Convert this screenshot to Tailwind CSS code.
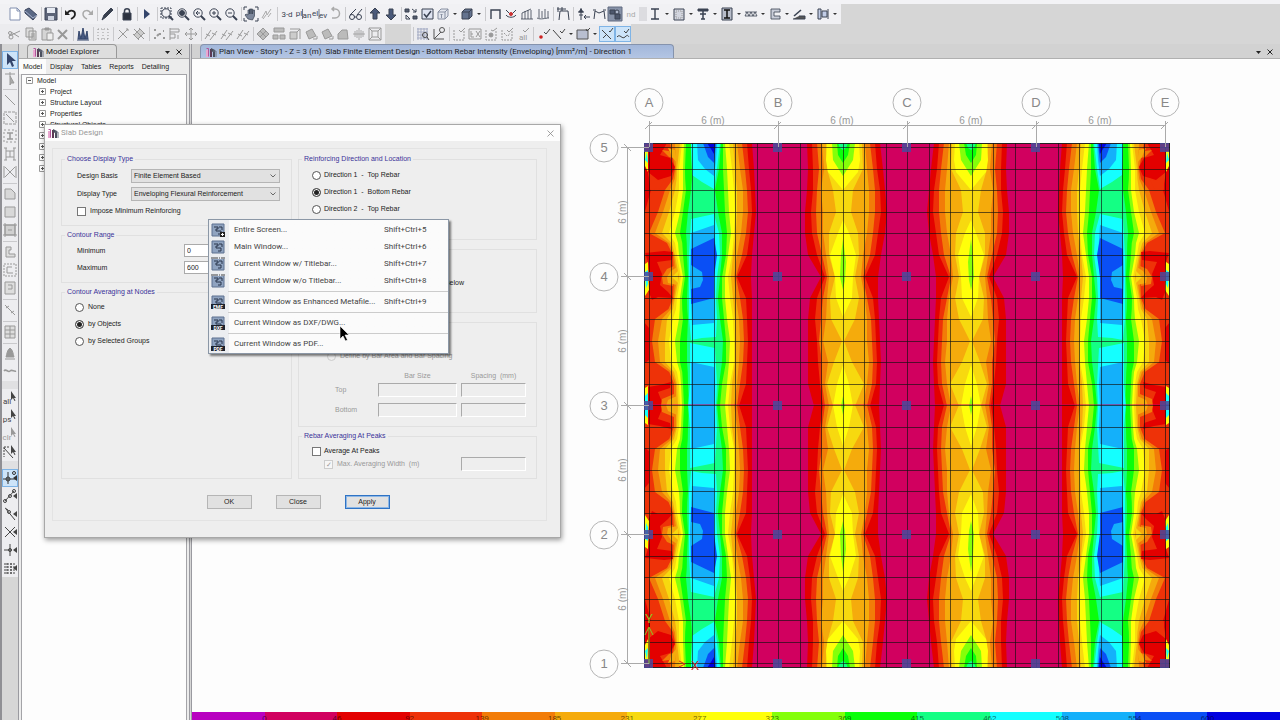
<!DOCTYPE html>
<html lang="en">
<head>
    <meta charset="UTF-8">
    <meta name="viewport" content="width=device-width, initial-scale=1.0">
    <title>Slab Design</title>
    <script src="https://cdn.jsdelivr.net/npm/@tailwindcss/browser@4"></script>
</head>
<body class="h-screen overflow-hidden flex flex-col bg-[#d6d6d6] font-['Liberation_Sans',sans-serif] text-[7px] leading-[10px] text-[#222]">
    <header class="shrink-0">
        <div class="h-1 bg-[#f3f3f6]"></div>
        <div id="toolbar-main" class="flex items-center h-5 w-fit pl-[7px] pr-0.5 bg-[#f1f1f4] text-[#3a4252]"></div>
        <div class="flex h-5">
            <div id="toolbar-edit" class="flex items-center h-full pl-[7px] pr-0.5 bg-[#ececef] text-[#999]"></div>
            <div id="toolbar-snap" class="flex items-center h-full ml-[26px] bg-[#ececef] text-[#999]"></div>
        </div>
    </header>

    <main class="flex-1 min-h-0 flex">
        <aside class="w-[18px] shrink-0 border-l-2 border-[#8f8f94] pt-[7px]">
            <div id="toolbar-draw" class="flex flex-col bg-[#ededf0] text-[#999]"></div>
        </aside>

        <section class="w-[172px] shrink-0 flex flex-col border-x border-[#9a9aa0] bg-[#ececec]">
            <div class="flex items-end h-[15px] bg-[#d9d9d9] border-b border-[#aaa]">
                <h2 class="flex items-center gap-0.5 ml-2 h-[14px] w-[90px] pl-1 rounded-t border border-b-0 border-[#999] bg-[#dedede] font-[Roboto,sans-serif] text-[8px]">
                    <svg class="size-3" viewBox="0 0 12 12"><use href="#logo"/></svg>Model Explorer
                </h2>
                <button aria-label="Window position" class="ml-auto w-3 h-3 grid place-items-center"><svg class="w-[5px] h-[3px]" viewBox="0 0 5 3"><path d="M0 0h5L2.500 3z" fill="#222"/></svg></button>
                <button aria-label="Close explorer" class="w-3 h-3 mr-1 grid place-items-center"><svg class="size-[6px]" viewBox="0 0 6 6"><path d="M.5.5l5 5M5.500.5l-5 5" stroke="#222"/></svg></button>
            </div>
            <nav class="flex h-[15px] items-center">
                <button class="h-full px-1 bg-[#fcfcfc]">Model</button>
                <button class="px-1">Display</button>
                <button class="px-1">Tables</button>
                <button class="px-1">Reports</button>
                <button class="px-1">Detailing</button>
            </nav>
            <ul id="tree" class="flex-1 mx-0.5 border border-b-0 border-[#a4a4a8] bg-[#fdfdfd] leading-[11px]"></ul>
        </section>

        <section class="flex-1 min-w-0 flex flex-col border-l border-[#9a9aa0] ml-px bg-[#fdfdfd]">
            <div class="flex items-end h-[15px] bg-[#d2d2d2] border-b border-[#b0b0b0]">
                <h1 class="flex items-center gap-0.5 ml-2 w-[474px] h-[14px] pl-1 rounded-t border border-b-0 border-[#8593ad] bg-linear-to-b from-[#a3b7da] to-[#b3c5e4] font-[Roboto,sans-serif] text-[8px] whitespace-nowrap">
                    <svg class="size-3 shrink-0" viewBox="0 0 12 12"><use href="#logo"/></svg>
                    <span>Plan View - Story1 - Z = 3 (m)&nbsp; Slab Finite Element Design - Bottom Rebar Intensity (Enveloping) [mm²/m] - Direction 1</span>
                </h1>
                <button aria-label="Window list" class="ml-auto w-3 h-3 grid place-items-center"><svg class="w-[5px] h-[3px]" viewBox="0 0 5 3"><path d="M0 0h5L2.500 3z" fill="#222"/></svg></button>
                <button aria-label="Close view" class="w-3 h-3 mr-1 grid place-items-center"><svg class="size-[6px]" viewBox="0 0 6 6"><path d="M.5.5l5 5M5.500.5l-5 5" stroke="#222"/></svg></button>
            </div>
            <svg class="flex-1 min-h-0 w-full font-['Liberation_Sans',sans-serif]" viewBox="192 59 1088 653">
                <defs>
                    <g id="quarter"></g>
                    <g id="half"><use href="#quarter"/><use href="#quarter" transform="matrix(1 0 0 -1 0 811)"/></g>
                </defs>
                <use href="#half"/>
                <use href="#half" transform="matrix(-1 0 0 1 1814 0)"/>
                <g id="mesh"></g>
                <g id="axes"></g>
            </svg>
            <div id="legend" class="h-2 shrink-0 flex overflow-hidden text-[8px]"></div>
        </section>
    </main>

    <!-- Slab Design dialog -->
    <form class="absolute left-11 top-[124px] w-[517px] h-[414px] flex flex-col border border-[#a8a8a8] bg-[#eee] shadow-[1px_2px_5px_rgba(0,0,0,.4)]" onsubmit="return false">
        <div class="h-4 flex items-center px-0.5 gap-0.5 bg-[#fdfdfd] text-[#999] font-[Roboto,sans-serif] text-[8px]">
            <svg class="size-3" viewBox="0 0 12 12"><use href="#logo"/></svg>
            <h2>Slab Design</h2>
            <button type="button" aria-label="Close" class="ml-auto mr-0.5 size-3 grid place-items-center"><svg class="size-[7px]" viewBox="0 0 7 7"><path d="M.5.5l6 6M6.500.5l-6 6" stroke="#888" stroke-width=".8"/></svg></button>
        </div>
        <div class="flex-1 ml-[7px] mt-[7px] mb-4 mr-[13px] border border-[#e3e3e3] pt-[5px] pl-2 pr-[9px] flex flex-col">
            <div class="flex gap-1.5 h-[325px]">
                <div class="w-[231px] flex flex-col gap-1">
                    <fieldset class="min-w-0 h-[72px] border border-[#e0e0e0] px-[15px]">
                        <legend class="-ml-3 px-0.5 text-[#3a3299]">Choose Display Type</legend>
                        <div class="flex flex-col gap-1 pt-[5px]">
                            <div class="flex items-center justify-between">
                                <label for="basis">Design Basis</label>
                                <span class="relative w-[149px] -mr-1"><select id="basis" class="block appearance-none w-full h-[14px] pl-0.5 border border-[#b5b5b5] bg-[#e1e1e1]"><option>Finite Element Based</option></select><svg class="absolute right-1 top-[5px] w-[6px] h-1 pointer-events-none" viewBox="0 0 6 4"><path d="M.5.5L3 3 5.500.5" fill="none" stroke="#666"/></svg></span>
                            </div>
                            <div class="flex items-center justify-between">
                                <label for="type">Display Type</label>
                                <span class="relative w-[149px] -mr-1"><select id="type" class="block appearance-none w-full h-[14px] pl-0.5 border border-[#b5b5b5] bg-[#e1e1e1]"><option>Enveloping Flexural Reinforcement</option></select><svg class="absolute right-1 top-[5px] w-[6px] h-1 pointer-events-none" viewBox="0 0 6 4"><path d="M.5.5L3 3 5.500.5" fill="none" stroke="#666"/></svg></span>
                            </div>
                            <label class="flex items-center gap-1 h-3"><input type="checkbox" class="appearance-none size-[9px] border border-[#777] bg-white">Impose Minimum Reinforcing</label>
                        </div>
                    </fieldset>
                    <fieldset class="min-w-0 h-[53px] border border-[#e0e0e0] px-[15px]">
                        <legend class="-ml-3 px-0.5 text-[#3a3299]">Contour Range</legend>
                        <div class="flex flex-col gap-1 pt-1">
                            <div class="flex items-center"><label for="min" class="w-[107px]">Minimum</label><input id="min" value="0" class="w-20 h-[13px] pl-0.5 border border-[#aaa] bg-white"></div>
                            <div class="flex items-center"><label for="max" class="w-[107px]">Maximum</label><input id="max" value="600" class="w-20 h-[13px] pl-0.5 border border-[#aaa] bg-white"></div>
                        </div>
                    </fieldset>
                    <fieldset class="min-w-0 flex-1 border border-[#e0e0e0] px-[13px]">
                        <legend class="-ml-2.5 px-0.5 text-[#3a3299]">Contour Averaging at Nodes</legend>
                        <div class="flex flex-col gap-[5px] pt-1">
                            <label class="flex items-center gap-1 h-3"><input type="radio" name="avg" class="appearance-none size-[9px] rounded-full border border-[#555] bg-white checked:bg-[#222] checked:shadow-[inset_0_0_0_1px_white]">None</label>
                            <label class="flex items-center gap-1 h-3"><input type="radio" name="avg" checked class="appearance-none size-[9px] rounded-full border border-[#555] bg-white checked:bg-[#222] checked:shadow-[inset_0_0_0_1px_white]">by Objects</label>
                            <label class="flex items-center gap-1 h-3"><input type="radio" name="avg" class="appearance-none size-[9px] rounded-full border border-[#555] bg-white checked:bg-[#222] checked:shadow-[inset_0_0_0_1px_white]">by Selected Groups</label>
                        </div>
                    </fieldset>
                </div>
                <div class="flex-1 flex flex-col gap-1">
                    <fieldset class="min-w-0 h-[86px] border border-[#e0e0e0] px-[13px]">
                        <legend class="-ml-2.5 px-0.5 text-[#3a3299]">Reinforcing Direction and Location</legend>
                        <div class="flex flex-col gap-[5px] pt-[5px]">
                            <label class="flex items-center gap-[3px] h-3 whitespace-pre"><input type="radio" name="dir" class="appearance-none size-[9px] rounded-full border border-[#555] bg-white checked:bg-[#222] checked:shadow-[inset_0_0_0_1px_white]">Direction 1  -  Top Rebar</label>
                            <label class="flex items-center gap-[3px] h-3 whitespace-pre"><input type="radio" name="dir" checked class="appearance-none size-[9px] rounded-full border border-[#555] bg-white checked:bg-[#222] checked:shadow-[inset_0_0_0_1px_white]">Direction 1  -  Bottom Rebar</label>
                            <label class="flex items-center gap-[3px] h-3 whitespace-pre"><input type="radio" name="dir" class="appearance-none size-[9px] rounded-full border border-[#555] bg-white checked:bg-[#222] checked:shadow-[inset_0_0_0_1px_white]">Direction 2  -  Top Rebar</label>
                        </div>
                    </fieldset>
                    <fieldset class="min-w-0 h-[69px] border border-[#e0e0e0] px-[13px]">
                        <legend class="px-0.5">&nbsp;</legend>
                        <p class="w-[152px] pt-6 text-right">Specified Below</p>
                    </fieldset>
                    <fieldset disabled class="min-w-0 h-[110px] border border-[#e0e0e0] pl-7 pr-2.5 text-[#999]">
                        <legend class="px-0.5">&nbsp;</legend>
                        <label class="flex items-center gap-1 pt-6"><input type="radio" class="appearance-none size-[9px] rounded-full border border-[#ccc]">Define by Bar Area and Bar Spacing</label>
                        <div class="grid grid-cols-[1fr_79px_65px] gap-x-1 gap-y-1.5 pt-2.5 pl-2 items-center">
                            <span></span><span class="text-center -mb-1">Bar Size</span><span class="text-center -mb-1 whitespace-pre">Spacing  (mm)</span>
                            <span>Top</span><input aria-label="Top bar size" class="h-[14px] min-w-0 border border-t-[#aaa] border-l-[#aaa] border-b-white border-r-white"><input aria-label="Top spacing" class="h-[14px] min-w-0 border border-t-[#aaa] border-l-[#aaa] border-b-white border-r-white">
                            <span>Bottom</span><input aria-label="Bottom bar size" class="h-[14px] min-w-0 border border-t-[#aaa] border-l-[#aaa] border-b-white border-r-white"><input aria-label="Bottom spacing" class="h-[14px] min-w-0 border border-t-[#aaa] border-l-[#aaa] border-b-white border-r-white">
                        </div>
                    </fieldset>
                    <fieldset class="min-w-0 flex-1 border border-[#e0e0e0] px-[13px]">
                        <legend class="-ml-2.5 px-0.5 text-[#3a3299]">Rebar Averaging At Peaks</legend>
                        <label class="flex items-center gap-[3px] pt-[5px]"><input type="checkbox" class="appearance-none size-[9px] border border-[#777] bg-white">Average At Peaks</label>
                        <div class="flex items-center justify-between pt-px pl-3 -mr-1 text-[#999]">
                            <label for="maxavg" class="flex items-center gap-1 whitespace-pre"><input type="checkbox" id="maxavg" checked disabled class="appearance-none size-[9px] grid place-items-center border border-[#ccc] bg-[#f6f6f6] leading-[7px] before:content-['✓']">Max. Averaging Width  (m)</label>
                            <input aria-label="Averaging width" disabled class="w-[65px] h-[14px] mr-px border border-t-[#aaa] border-l-[#aaa] border-b-white border-r-white">
                        </div>
                    </fieldset>
                </div>
            </div>
            <div class="flex justify-center gap-6 mt-4 pr-0.5">
                <button class="w-[45px] h-[14px] border border-[#b5b5b5] bg-[#e1e1e1]">OK</button>
                <button class="w-[45px] h-[14px] border border-[#b5b5b5] bg-[#e1e1e1]">Close</button>
                <button class="w-[45px] h-[14px] border border-[#2f73c4] bg-[#e1e1e1] shadow-[inset_0_0_0_1px_#8db7e6]">Apply</button>
            </div>
        </div>
    </form>

    <!-- Capture picture menu -->
    <div id="menu" role="menu" class="absolute left-[208px] top-[219px] w-[241px] py-px border border-[#8b97a6] bg-[#fbfbfb] bg-linear-to-r from-[#eceef1] from-[20px] to-[#fbfbfb] to-[20px] shadow-[2px_2px_2px_rgba(0,0,0,.5)] font-[Roboto,sans-serif] text-[8px] text-[#444]"></div>
    <svg class="absolute left-[339px] top-[325px] w-[11px] h-[17px] pointer-events-none" viewBox="0 0 11 17"><path d="M1 1v13l3-3 2.500 5 2-1L6 10h4z" fill="#000" stroke="#fff" stroke-width=".6"/></svg>

    <svg class="hidden">
        <symbol id="logo" viewBox="0 0 12 12"><path d="M1 4h3v7H1z" fill="#e9a8d0"/><path d="M1.500 2.500h2v8" fill="none" stroke="#b0559a"/><path d="M5 3h2v8H5z" fill="#5d3a55"/><path d="M6 2l4 2v7H8V6L6 5z" fill="#4a4f5e"/><path d="M8 5h3v6" fill="none" stroke="#6b7180"/></symbol>
    </svg>

    <script>
        // Glyphs on a 16x16 grid; strokes take the button's text colour
        const lens = '<circle cx="7" cy="7" r="4.200"/><path d="M10 10l4 4" stroke-width="2"/>';
        const arrowUp = '<path d="M8 2l5 5h-3v6H6V7H3z" fill="#4b5a7a"/>';
        const slab = '<path d="M3 6l6-3 5 6-7 4z" fill="currentColor" fill-opacity=".5"/>';
        const cursor = '<path d="M9 1v9l2-2 1.500 3 1-.5L12 8h2z" fill="currentColor" stroke="none"/>';
        const snapEnd = '<path d="M15 5l-4 3 4 3z" fill="currentColor" stroke="none"/>';
        const word = (t, x = 8, y = 11) => `<text x="${x}" y="${y}" text-anchor="middle" font-size="8" font-family="Roboto, sans-serif" fill="currentColor" stroke="none">${t}</text>`;
        const icons = {
            new: '<path d="M3 2h7l3 3v9H3z" fill="#fff" stroke="#8290b0"/><path d="M10 2v3h3" stroke="#8290b0"/>',
            open: '<path d="M2 4l4-2 8 7-4 5-8-7z" fill="#5a6885" stroke="#39435c"/><path d="M2 5l8 7 4-3" stroke="#a4b0cc"/>',
            save: '<path d="M2 2h12v12H2z" fill="#5c6478" stroke="#3d4558"/><path d="M4 2h8v5H4z" fill="#e8ecf4" stroke="none"/><path d="M5 10h6v4H5z" fill="#cdd3e0" stroke="none"/>',
            undo: '<path d="M4 8c2-5 8-4 8 0 0 3-2 4-4 5" stroke="#222" stroke-width="1.800"/><path d="M2 4v5h5z" fill="#222" stroke="none"/>',
            redo: '<path d="M12 8c-2-5-8-4-8 0 0 3 2 4 4 5" stroke="#aaa" stroke-width="1.500"/><path d="M14 4v5H9z" fill="#aaa" stroke="none"/>',
            pen: '<path d="M3 14l2-5 7-7 2 2-7 7z" fill="#39404e"/>',
            lock: '<path d="M4 7h8v7H4z" fill="#2c3240"/><path d="M5.500 7V5c0-3 5-3 5 0v2" stroke-width="1.500"/>',
            run: '<path d="M5 3l6 5-6 5z" fill="#34456b" stroke="none"/>',
            zoomWin: lens + '<path d="M2 2h10v10H2z" stroke-dasharray="2 1"/>',
            zoomFull: lens + '<circle cx="7" cy="7" r="2.500" fill="currentColor"/>',
            zoomPrev: lens + '<path d="M9 7H5m2-2L5 7l2 2"/>',
            zoomIn: lens + '<path d="M5 7h4M7 5v4"/>',
            zoomOut: lens + '<path d="M5 7h4"/>',
            pan: '<path d="M5 13L2 9l1-1 2 1V4h1.500v4V3H8v5-5h1.500v5l.5-4h1.500v6l-2 4z" fill="#7d879b" stroke-width=".7"/><path d="M1 4V1h3M12 1h3v3M1 12v3h3M15 12v3h-3"/>',
            walk: '<path d="M3 12l4-7 1 4 4-6M4 13l3-4M9 11l3-4" stroke="#aaa"/>',
            t3d: word('3-d', 8, 11), tplan: word('pl', 4, 10) + word('an', 12, 12) + '<path d="M7.500 3v10" stroke-width=".7"/>', tele: word('el', 4, 10) + word('ev', 12, 12) + '<path d="M8 3v10" stroke-width=".7"/>', tnd: '<g color="#aaa">' + word('nd') + '</g>',
            rotate: '<path d="M5 3h3c6 0 6 9 0 9H5M7 1L5 3l2 2" stroke="#aaa" stroke-width="1.500"/>',
            glasses: '<circle cx="5" cy="11" r="2.500"/><circle cx="12" cy="11" r="2.500"/><path d="M3 9l6-6M10 9l5-6M7 11h2"/>',
            up: arrowUp, down: '<g transform="rotate(180 8 8)">' + arrowUp + '</g>',
            views: '<path d="M2 3h4v3H2zM10 10h4v3h-4z" fill="#555d6e"/><path d="M9 3l4 3m0-3v3h-3M3 9v4h4M3 9l4 4"/>',
            check: '<path d="M3 3h11v10H3z" fill="#dfe4f2"/><path d="M5 8l2.500 3L12 5" stroke-width="1.500"/>',
            box: '<path d="M3 6l3-3h7v7l-3 3H3z" fill="#e3e6ee" stroke="#8890a2"/><path d="M3 6h7v7M10 6l3-3M6.500 12V8m-1 1l1-1 1 1" stroke="#8890a2"/>',
            solid: '<path d="M3 6l3-3h7v7l-3 3H3z" fill="#64738f"/><path d="M3 6h7v7M10 6l3-3"/>',
            frame: '<path d="M4 13V4h9v9" stroke-width="1.400"/>',
            moment: '<path d="M3 4l5 5 5-5M3 9c2 3 8 3 10 0"/><circle cx="8" cy="8" r="1.500" fill="#c33" stroke="#c33"/>',
            forces: '<path d="M2 13h12M3 13V7M6 13V5M9 13V4M12 13V4M3 7l9-4" stroke-width=".8"/>',
            loads: '<path d="M2 12c4 2 8 0 12 0M4 3v9M7 5v7M10 3v9M13 5v7" stroke-width=".8"/>',
            deform: '<path d="M4 14l1-9h8l1 9M2 3h9M3 1v5M7 1v4"/>',
            joint: '<path d="M6 2v12M3 6h6M4 9h4M6 3l2 3H4z" fill="currentColor"/><path d="M10 11h5m-4-2l-2 2 2 2"/>',
            truss: '<path d="M3 13l1-8 4 2 5-2 1 8M2 4h3M12 4h3"/>',
            contour: '<path d="M1 1h14v14H1z" fill="#8792a8" stroke="#606a80"/><path d="M3 4h5v4H3zM8 8h5v5H8z" fill="#4d576c"/><circle cx="10" cy="6" r="2" fill="#aeb8cc"/>',
            ibeam: '<path d="M4 3h8M4 13h8M8 3v10" stroke-width="1.400"/>',
            section: '<path d="M3 3h10v11H3z" fill="#d2d5df"/><path d="M5 5h6v7H5z" stroke="#999" stroke-dasharray="1 1"/>',
            tee: '<path d="M3 3h10v2H3z" fill="currentColor"/><path d="M8 5v8M5 8h6M6 13h4" stroke-width="1.500"/>',
            encased: '<path d="M3 2h10v12H3z" fill="#b8bdca"/><path d="M5 4h6M5 12h6M8 4v8" stroke="#111" stroke-width="1.500"/>',
            joist: '<path d="M2 6h12M2 10h12M2 10l2-4 2 4 2-4 2 4 2-4 2 4" stroke-width=".8"/>',
            channel: '<path d="M13 3H4v10h9v-3H7V6h6z" fill="#c9cdd9" stroke-width=".8"/>',
            slope: '<path d="M3 10l7-6" stroke-width="1.600"/><path d="M2 13h12v-3H8" fill="#555"/>',
            panel: '<path d="M3 3h3v10H3zM7 5h5v6H7z" fill="#c2cde6"/><path d="M13 3v10"/>',
            cut: '<path d="M2 10l11-5M4 6l8 5"/><circle cx="4" cy="11" r="2"/><circle cx="3" cy="7" r="1.500"/>',
            copy: '<path d="M3 2h7v9H3zM6 5h7v9H6z" fill="#ddd"/><path d="M8 8h4M8 10h4M8 12h4"/>',
            paste: '<path d="M3 3h9v11H3z" fill="#d5d5d5"/><path d="M6 2h4v2H6z" fill="#999"/><path d="M8 7h6v7H8z" fill="#eee"/>',
            del: '<path d="M3 4l9 9M12 4l-9 9" stroke-width="2"/>',
            towers: '<path d="M2 14h12M3 13l1-8 2 8zM6 13l2-11 2 11zM10 13l2-8 1 8z" fill="#485a82" stroke="#34466c"/>',
            points: '<path d="M3 3v10M8 3v10M13 3v10M3 3h10M3 13h10" stroke-dasharray="1 2"/>',
            lineEdit: '<path d="M3 13L13 3M4 4l8 8M11 3h2v2"/>',
            areaEdit: '<path d="M3 9l6-6 4 4-6 6z" fill="#ccc"/><path d="M3 3l10 10M8 2l6 6M2 8l6 6"/>',
            nodes: '<path d="M3 4h2M8 8h2M3 12h2M12 12h2M12 5h1M6 10l2-2" stroke-width="2"/>',
            align: '<path d="M3 2v12M3 3h9v3H3M3 8h5v4H3M11 9v4"/>',
            move: '<path d="M8 2v12M2 8h12M6 4l2-2 2 2M6 12l2 2 2-2M4 6L2 8l2 2M12 6l2 2-2 2"/>',
            join: '<path d="M2 13L8 4M7 14l7-9M3 8l4 2M9 7l4 2"/>',
            slab, divide: '<path d="M8 2l6 6-6 6-6-6zM5 5l6 6M11 5l-6 6" fill="#bbb"/>',
            rows: '<path d="M3 2h10v4H3zM2 9h5v4H2zM9 9h5v4H9z" fill="#bbb"/>',
            expand: '<path d="M3 6h7v7H3z" fill="#ccc"/><path d="M3 3h10v10M10 6l3-3"/>',
            turn: '<path d="M3 6l6-3 4 7-7 3z" fill="#bbb"/><path d="M10 13h4v-3"/>',
            poly: '<path d="M3 8l4-4h5l1 9H3z" fill="#bbb"/>',
            mirror: '<path d="M8 2v12M2 8h12M4 5v6M12 5v6M6 4v8M10 4v8" stroke-width=".8"/>',
            inset: '<path d="M2 2h12v12H2zM5 5h6v6H5zM2 2l3 3M14 2l-3 3M2 14l3-3M14 14l-3-3"/>',
            gridSnap: '<path d="M2 3h11M2 6h11M2 9h11M2 12h11M3 2v12M6 2v12M9 2v12M12 2v12" stroke="#a5acc4"/><circle cx="10" cy="9" r="2.500" stroke="#444"/><path d="M12 11l2 3" stroke="#444"/>',
            axis: '<path d="M3 3v10h10M3 13l7-7" stroke="#555"/><circle cx="11" cy="4" r="2.500" stroke="#555"/>',
            dashBox: '<path d="M3 4v10h10V4" stroke-dasharray="2 1"/><path d="M8 4l2 2 4-4"/>',
            exBox: '<path d="M2 3h12v10H2zM4 5v6h3M4 8h2M9 5l4 6M13 5l-4 6"/>',
            dotBox: '<path d="M3 4v10h10V4" stroke-dasharray="2 1"/><circle cx="8" cy="9" r="2" fill="currentColor"/><path d="M8 4l2 1 4-3"/>',
            pairBox: '<path d="M3 4v10h10V4M5 7l3 3M9 10l2-3" stroke-dasharray="2 1"/><path d="M8 4l2 2 4-4"/>',
            tall: word('all', 8, 14) + '<path d="M8 4l2 2 4-4"/>',
            redDot: '<circle cx="6" cy="11" r="1.800" fill="#c22" stroke="none"/><path d="M9 6l2 2 4-5" stroke="#444"/>',
            lineCheck: '<path d="M2 4l8 9M9 5l2 2 3-4" stroke="#444"/>',
            areaCheck: '<path d="M2 4h11v9H2z" fill="#b9bfd0" stroke="#555"/><path d="M11 3l1 2 3-3" stroke="#444"/>',
            meshA: '<path d="M3 4l9 9M4 12l3-3M10 5l1 1 3-4" stroke="#444"/>',
            meshB: '<path d="M2 11c3-4 5 3 8 0s3-1 4 0M9 5l2 2 3-4" stroke="#444"/>',
            select: '<path d="M5 1v12l3-3 2 5 2-1-2-5h4z" fill="#34456b" stroke="none"/>',
            reshape: '<path d="M3 4h10M8 2v4M8 6l4 7H9l-1 2z" fill="#aaa"/>',
            line: '<path d="M3 3l10 10"/>',
            lineBox: '<path d="M2 2h12v12H2z" stroke-dasharray="3 1"/><path d="M4 4l8 8"/>',
            iBox: '<path d="M2 2h12v12H2z" stroke-dasharray="2 2"/><path d="M5 5h6M5 11h6M8 5v6" stroke-width="1.500"/>',
            ladder: '<path d="M4 2v12M12 2v12M4 5h8M4 11h8M8 5v6M2 2h3M11 2h3M2 14h3M11 14h3"/>',
            xBox: '<path d="M2 2v12M14 2v12M3 3l10 10M13 3L3 13"/>',
            wallA: '<path d="M3 3h6l4 4v6H3z" fill="#d8d8d8"/>',
            rect: '<path d="M3 3h10v10H3z" fill="#d8d8d8"/>',
            rectN: '<path d="M3 3h10v10H3z" fill="#d0d0d0"/><path d="M1 3h14M1 13h14M3 1v14M13 1v14M6 8h4" />',
            cee: '<path d="M9 3H4v10h9v-3H7V6h2z" fill="#ddd"/>',
            ceeBox: '<path d="M2 2h12v12H2z" stroke-dasharray="2 1"/><path d="M10 5H5v6h6"/>',
            opening: '<path d="M3 2h10v12H3z" fill="#ddd"/><path d="M6 5h4v4H6"/>',
            xLine: '<path d="M3 3l10 10M4 6l3-2M9 11l3-2"/>',
            win: '<path d="M3 2h10v12H3zM8 2v12M3 6h10M3 10h10" fill="#ddd"/>',
            bell: '<path d="M8 2c3 2 3 6 4 9H4c1-3 1-7 4-9zM3 13h10" fill="#999"/>',
            wave: '<path d="M2 7c2-3 4 2 6 0s4 1 6 0" stroke-width="1.500"/>',
            sAll: word('all', 5, 14) + cursor, sPs: word('ps', 5, 14) + cursor, sClr: word('clr', 5, 14) + cursor,
            sLine: '<path d="M2 4l9 10"/><path d="M2 3h6M2 3v10" stroke-dasharray="2 1"/>' + cursor,
            snapPt: '<path d="M6 2v12M1 9h13"/><circle cx="6" cy="9" r="2"/><circle cx="12" cy="3" r="1.500"/>' + snapEnd,
            snapMid: '<path d="M3 13l9-10"/><circle cx="3" cy="13" r="1.500"/><circle cx="8" cy="8" r="1.500"/><circle cx="12" cy="3" r="1.500"/>' + snapEnd,
            snapPerp: '<path d="M4 3l9 11M3 2l3 2"/><circle cx="7" cy="6" r="1.500"/>' + snapEnd,
            snapX: '<path d="M3 3l10 10M13 3L3 13"/>' + snapEnd,
            snapPlus: '<path d="M8 2v12M2 8h8"/><circle cx="8" cy="8" r="1.500"/>' + snapEnd,
            snapGrid: '<path d="M2 4h12M2 7h12M2 10h12M2 13h12M5 3v11M9 3v11" stroke-dasharray="2 1"/>' + snapEnd,
        };
        const draw = name => `<svg class="size-4 overflow-visible" viewBox="0 0 16 16" fill="none" stroke="currentColor">${icons[name]}</svg>`;

        // "|" separator, "=" grip, "v" drop-down arrow, "*" pressed, "!" enabled on a grey bar
        function fillBar(id, list, vertical) {
            document.getElementById(id).innerHTML = list.split(' ').map(item => {
                if (item === '|') return vertical
                    ? '<i class="h-1 mx-px flex items-center"><i class="w-full h-px bg-[#c9c9cc]"></i></i>'
                    : '<i class="w-1 flex justify-center"><i class="w-px h-3.5 bg-[#c9c9cc]"></i></i>';
                if (item === '=') return vertical ? '<i class="h-2 bg-[#e0e0e2]"></i>' : '<i class="w-2 h-3.5 bg-[#dcdce0]"></i>';
                if (item === 'v') return '<button aria-label="More" class="w-2 h-4 grid place-items-center"><svg class="w-1 h-0.5" viewBox="0 0 4 2"><path d="M0 0h4L2 2z" fill="#333"/></svg></button>';
                const name = item.replace(/[*!]/, '');
                const size = vertical ? 'w-4 h-[18px] grid place-items-center ' : 'w-4 h-4 grid place-items-center ';
                const look = item.includes('*') ? 'bg-[#cde4f9] outline -outline-offset-1 outline-[#7fb4e6] text-[#333]' : item.includes('!') ? 'text-[#444]' : '';
                return `<button aria-label="${name}" class="${size}${look}">${draw(name)}</button>`;
            }).join('');
        }
        fillBar('toolbar-main', 'new open | save | undo redo | pen | lock | run | zoomWin zoomFull zoomPrev zoomIn zoomOut | pan walk | t3d tplan tele rotate | glasses | up down | views check box v solid v | frame moment forces loads | deform | joint truss contour tnd = ibeam v section v tee v encased v joist v channel v slope v panel v');
        fillBar('toolbar-edit', 'cut copy paste del | towers | points | lineEdit areaEdit | nodes align move | join join join | divide rows expand turn turn poly mirror inset');
        fillBar('toolbar-snap', '| gridSnap axis | dashBox exBox dotBox pairBox tall | redDot lineCheck v areaCheck v meshA* meshB*');
        fillBar('toolbar-draw', 'select* reshape | line lineBox iBox ladder xBox | wallA rect rectN | cee ceeBox opening | xLine | win | bell wave = sAll! sPs! sClr sLine! = snapPt* snapMid! snapPerp! snapX! snapPlus! snapGrid!', true);

        // Model tree
        const box = plus => `<svg class="size-[7px]" viewBox="0 0 7 7" fill="none" stroke="#999"><path d="M.5.5h6v6h-6z"/><path d="M2 3.500h3${plus ? 'M3.500 2v3' : ''}" stroke="#555"/></svg>`;
        document.getElementById('tree').innerHTML = `<li class="flex items-center gap-1 pl-1">${box(false)}Model</li>` +
            ['Project', 'Structure Layout', 'Properties', 'Structural Objects', 'Groups', 'Loads', 'Named Items', 'Named Plots']
                .map(t => `<li class="flex items-center gap-1 pl-[17px]">${box(true)}${t}</li>`).join('');

        // Menu
        const shots = [['Entire Screen...', 5], ['Main Window...', 6], ['Current Window w/ Titlebar...', 7], ['Current Window w/o Titlebar...', 8], null,
            ['Current Window as Enhanced Metafile...', 9, 'EMF'], null, ['Current Window as DXF/DWG...', 0, 'DXF'], null, ['Current Window as PDF...', 0, 'PDF']];
        document.getElementById('menu').innerHTML = shots.map((s, i) => {
            if (!s) return '<div class="h-1 pl-[19px] flex items-center"><hr class="w-full border-[#ccc]"></div>';
            const extra = s[2]
                ? `<path d="M0 9h14v5H0z" fill="#1d222c"/><text x="7" y="13.500" text-anchor="middle" font-size="5" font-weight="bold" fill="#fff">${s[2]}</text>`
                : i === 0 ? '<path d="M9 9h5v5H9z" fill="#222"/><path d="M10 11.500h3M11.500 10v3" stroke="#fff"/>'
                : i > 1 ? '<path d="M0 0h14v2H0z" fill="#e8ebf0"/><path d="M0 1h14" stroke="#444" stroke-dasharray="7 1 1 1"/>' : '';
            return `<button role="menuitem" class="w-full h-[17px] pl-0.5 flex items-center text-left">
                <svg class="size-[14px] mr-[9px]" viewBox="0 0 14 14"><path d="M1 1h12v12H1z" fill="#8fa3c0" stroke="#5d7090"/><path d="M3 4h4v2H5v2h5v3H7M8 4h3v3" fill="none" stroke="#28344a"/>${extra}</svg>
                <span class="w-[150px]">${s[0]}</span><span>${s[1] ? 'Shift+Ctrl+' + s[1] : ''}</span></button>`;
        }).join('');

        // Colour scale
        const scale = ['#b800c0', '#d1005f', '#e30000', '#ee3208', '#f27c08', '#f5ab0c', '#f7d90f', '#ffff0a', '#84ff0a', '#0aff0a', '#14ff84', '#14ffff', '#14b0fa', '#0a4ff5', '#0000e0'];
        const stops = ['', 0, 46, 92, 139, 185, 231, 277, 323, 369, 415, 462, 508, 554, 600];
        document.getElementById('legend').innerHTML = scale.map((c, i) =>
            `<span class="flex-1 h-4" style="background:${c}"><span class="block w-8 -ml-4 text-center leading-[14px] text-black/60">${stops[i]}</span></span>`).join('');

        // Contours of one quarter of the slab, mirrored for the others
        const rows = [143, 169, 190, 212, 233, 255, 277, 298, 319, 341, 362, 384, 406];
        const all = v => rows.map(() => v);
        const bands = [
            [2, all(644), [752, 754, 755, 756, 754, 752, 751, 752, 752, 752, 752, 752, 752]],
            [3, all(644), [747, 749, 751, 752, 750, 747, 737, 746, 747, 748, 747, 746, 739]],
            [4, [670, 675, 665, 658, 649, 673, 674, 673, 655, 652, 655, 674, 674], [742, 745, 747, 748, 746, 742, 736, 740, 743, 744, 743, 740, 737]],
            [5, [675, 676, 670, 663, 655, 674, 677, 674, 662, 658, 660, 676, 676], [737, 740, 743, 743, 741, 737, 734, 736, 739, 740, 739, 737, 734]],
            [6, [680, 677, 675, 669, 662, 675, 679, 675, 667, 665, 665, 677, 678], [733, 735, 737, 737, 736, 733, 731, 733, 735, 735, 735, 732, 731]],
            [7, [682, 679, 679, 675, 669, 677, 681, 677, 673, 669, 671, 679, 680], [729, 732, 734, 735, 734, 732, 728, 730, 733, 734, 734, 730, 728]],
            [8, [684, 683, 683, 680, 675, 679, 683, 680, 679, 675, 677, 681, 682], [725, 727, 728, 729, 731, 728, 725, 725, 727, 730, 729, 727, 725]],
            [9, [686, 685, 686, 683, 680, 683, 685, 682, 683, 680, 680, 683, 684], [723, 723, 724, 725, 727, 726, 722, 722, 724, 726, 726, 722, 720]],
            [10, [691, 692, 691, 688, 686, 687, 688, 687, 688, 687, 687, 688, 689], [721, 719, 715, 718, 722, 722, 720, 718, 720, 723, 722, 719, 717]],
            [2, [807, 808, 807, 805, 805, 808, 821, 810, 808, 808, 808, 808, 814], [880, 883, 885, 887, 885, 881, 878, 878, 879, 880, 881, 880, 879]],
            [3, [812, 813, 813, 811, 812, 817, 825, 817, 815, 817, 818, 820, 823], [875, 877, 880, 881, 878, 875, 865, 873, 875, 876, 877, 876, 870]],
            [4, [817, 819, 817, 816, 817, 822, 827, 823, 821, 819, 822, 822, 825], [870, 873, 875, 875, 873, 870, 863, 867, 871, 872, 873, 872, 867]],
            [5, [822, 824, 821, 823, 823, 826, 829, 827, 826, 823, 828, 825, 829], [865, 867, 869, 869, 867, 863, 861, 865, 867, 867, 869, 867, 863]],
            [6, [826, 827, 833, 836, 829, 829, 835, 830, 831, 842, 834, 827, 833], [862, 863, 853, 851, 858, 859, 855, 859, 855, 844, 852, 864, 855]],
        ];
        // Local patches: colour index and outline
        const patches = [
            [2, '644,143 667,143 660,155 670,158 675,167 671,176 658,180 648,172 651,190 644,215'],
            [3, '650,174 658,181 665,178 660,188 650,190'],
            [4, '662,150 669,151 674,158 669,157'],
            [5, '668,148 675,150 677,163 672,157'],
            [2, '645,253 664,251 673,252 672,260 657,262 662,274 660,285 668,292 673,298 658,297 652,300 648,290 648,262'],
            [4, '662,277 667,269 674,266 673,286 663,284'],
            [5, '667,277 671,271 677,267 677,285 668,283'],
            [6, '672,277 678,271 678,283'],
            [2, '644,322 649,328 649,360 644,364'],
            [2, '648,387 660,385 671,382 670,388 658,392 662,402 661,406 648,406'],
            [4, '661,406 662,399 674,394 675,406'],
            [5, '666,406 668,400 677,396 677,406'],
            [11, '691,143 720,143 718,160 717,169 714,189 702,182 692,175'],
            [12, '697,143 717,143 716,160 714,176 705,169 698,160'],
            [13, '703,143 716,143 714,163 708,157'],
            [14, '707,143 715,143 714,154 711,149'],
            [11, '691,219 714,214 719,233 720,255 717,277 716,298 717,319 716,337 702,338 691,340 689,319 689,255'],
            [12, '691,233 714,225 716,255 714,277 714,323 692,325 690,280'],
            [13, '691,249 714,238 717,255 714,277 714,298 691,304'],
            [12, '691,265 702,272 703,280 700,287 691,289'],
            [11, '690,343 715,348 717,384 716,406 688,406 690,384'],
            [12, '691,362 714,367 715,384 714,406 691,406'],
            [7, '827,143 859,143 860,160 858,172 843,190 828,172 826,160'],
            [8, '832,143 855,143 853,160 843,176 833,160'],
            [9, '837,143 850,143 848,155 843,163 838,155'],
            [10, '838,143 848,143 846,148 843,150 840,148'],
            [7, '843,220 849,233 856,255 853,277 852,298 843,317 836,298 835,277 830,255 838,233'],
            [8, '843,239 846,262 845,280 843,290 840,277 841,255'],
            [7, '843,365 849,384 853,406 833,406 837,384'],
            [8, '843,396 845,406 841,406'],
            [7, '645,151 648,151 648,172 645,166'],
            [11, '645,160 647,152 648,163'],
            [7, '645,264 648,262 649,290 645,296'],
            [11, '645,272 648,270 648,284 646,288'],
            [7, '645,388 648,386 648,406 645,406'],
            [11, '645,396 648,393 648,406 645,406'],
        ];
        // The edge strip's contours swell round each support: extra points [row, next row, y, share]
        const swell = [[1, 2, 179, .2], [4, 5, 243, .75], [7, 8, 309, .25], [10, 11, 372, .75]];
        function edge(xs) {
            const pts = xs.map((x, i) => [x, rows[i]]);
            if (xs[0] < 700) for (const [i, j, y, k] of swell) pts.push([xs[i] + (xs[j] - xs[i]) * k, y]);
            return pts.sort((a, b) => a[1] - b[1]).map(p => p.join());
        }
        let q = '<path fill="#d1005f" d="M644 143h264v263.500h-264z"/>';
        for (const [c, left, right] of bands)
            q += `<polygon fill="${scale[c]}" points="${edge(left).concat(edge(right).reverse()).join(' ')}"/>`;
        for (const [c, pts] of patches) q += `<polygon fill="${scale[c]}" points="${pts}"/>`;
        document.getElementById('quarter').innerHTML = q;

        // Mesh lines and column marks
        let m = '<rect x="644.5" y="143.5" width="525" height="524" fill="none" stroke="#222"/>';
        for (let i = 0; i <= 24; i++) {
            const x = Math.round(649 + i * 21.520) + .5, y = Math.round(148 + i * 21.520) - .5;
            m += `<path d="M${x} 143v525M644 ${y}h526" stroke="#111" stroke-opacity=".65"/>`;
        }
        for (let i = 0; i < 5; i++) for (let j = 0; j < 5; j++)
            m += `<rect x="${644 + i * 129}" y="${143 + j * 129}" width="9" height="9" fill="#4a4a9c" fill-opacity=".85"/>`;
        m += '<g font-size="12"><path d="M649 664v-36M645 635l4-8 4 8" stroke="#8ac926" fill="none"/><text x="645" y="623" fill="#8ac926">Y</text><path d="M679 661l6 3-6 3" stroke="#d22" fill="none"/><text x="691" y="670" fill="#c22">X</text></g>';
        document.getElementById('mesh').innerHTML = m;

        // Grid bubbles and dimensions
        let a = '<path d="M649 125.500h517M627.500 148v516" stroke="#aaa"/>';
        ['A', 'B', 'C', 'D', 'E'].forEach((t, i) => {
            const x = 649 + i * 129, y = 664 - i * 129;
            a += `<circle cx="${x}" cy="102.500" r="14" fill="none" stroke="#b5b5b5"/><text x="${x}" y="107" text-anchor="middle" font-size="13" fill="#888">${t}</text>
                <path d="M${x + .5} 121v26M${x - 4} 129l7-7" stroke="#aaa"/>
                <circle cx="604" cy="${y}" r="14" fill="none" stroke="#b5b5b5"/><text x="604" y="${y + 4}" text-anchor="middle" font-size="13" fill="#888">${i + 1}</text>
                <path d="M621 ${y - .5}h28M624 ${y - 4}l7 7" stroke="#aaa"/>`;
            if (i < 4) a += `<text x="${x + 64}" y="124" text-anchor="middle" font-size="10" fill="#999">6 (m)</text>
                <text transform="translate(626 ${y - 65}) rotate(-90)" text-anchor="middle" font-size="10" fill="#999">6 (m)</text>`;
        });
        document.getElementById('axes').innerHTML = a;
    </script>
</body>
</html>
